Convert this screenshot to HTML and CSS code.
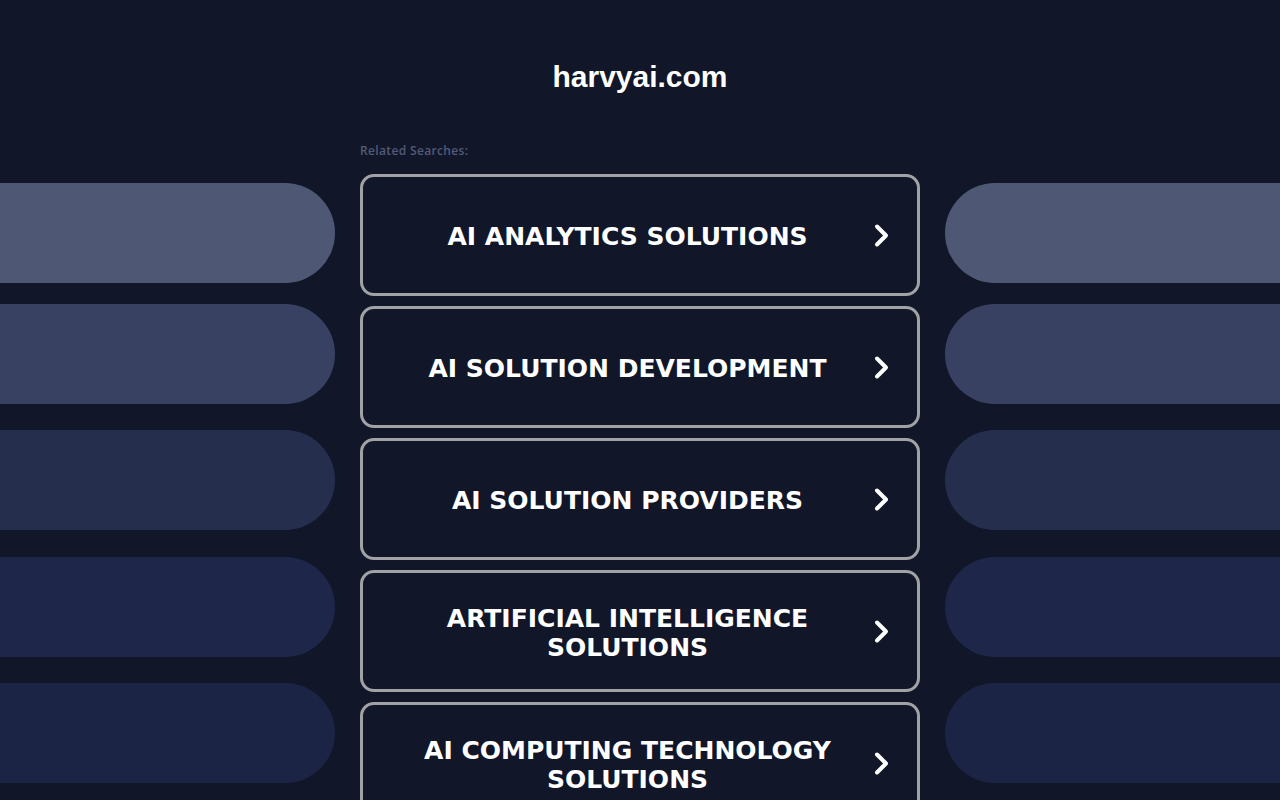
FILE: index.html
```html
<!DOCTYPE html>
<html lang="en">
<head>
<meta charset="utf-8">
<title>harvyai.com</title>
<link rel="stylesheet" href="styles.css">
</head>
<body>
<div class="page">
  <div class="side side-left">
    <div class="pill pill-1"></div>
    <div class="pill pill-2"></div>
    <div class="pill pill-3"></div>
    <div class="pill pill-4"></div>
    <div class="pill pill-5"></div>
  </div>
  <main class="center">
    <h1 class="title">harvyai.com</h1>
    <div class="related">Related Searches:</div>
    <div class="links">
      <a class="link" href="#"><span class="label">AI ANALYTICS SOLUTIONS</span><svg class="chev" viewBox="0 0 17 25"><path d="M4 3.5 L13 12.5 L4 21.5"/></svg></a>
      <a class="link" href="#"><span class="label">AI SOLUTION DEVELOPMENT</span><svg class="chev" viewBox="0 0 17 25"><path d="M4 3.5 L13 12.5 L4 21.5"/></svg></a>
      <a class="link" href="#"><span class="label">AI SOLUTION PROVIDERS</span><svg class="chev" viewBox="0 0 17 25"><path d="M4 3.5 L13 12.5 L4 21.5"/></svg></a>
      <a class="link" href="#"><span class="label">ARTIFICIAL INTELLIGENCE SOLUTIONS</span><svg class="chev" viewBox="0 0 17 25"><path d="M4 3.5 L13 12.5 L4 21.5"/></svg></a>
      <a class="link" href="#"><span class="label">AI COMPUTING TECHNOLOGY SOLUTIONS</span><svg class="chev" viewBox="0 0 17 25"><path d="M4 3.5 L13 12.5 L4 21.5"/></svg></a>
    </div>
  </main>
  <div class="side side-right">
    <div class="pill pill-1"></div>
    <div class="pill pill-2"></div>
    <div class="pill pill-3"></div>
    <div class="pill pill-4"></div>
    <div class="pill pill-5"></div>
  </div>
</div>
</body>
</html>
```
FILE: styles.css
```css
html, body {
  margin: 0;
  padding: 0;
  height: 800px;
  overflow: hidden;
  background: #111729;
}

.page {
  display: grid;
  grid-template-columns: 1fr 560px 1fr;
  column-gap: 25px;
  height: 800px;
}

.side {
  display: flex;
  flex-direction: column;
  padding-top: 183px;
}

.pill {
  height: 100px;
  flex: none;
}

.side-left .pill { border-radius: 0 50px 50px 0; }
.side-right .pill { border-radius: 50px 0 0 50px; }

.pill-1 { background: #4e5875; }
.pill-2 { background: #394162; margin-top: 21px; }
.pill-3 { background: #262e4e; margin-top: 26px; }
.pill-4 { background: #1e2649; margin-top: 27px; }
.pill-5 { background: #1c2445; margin-top: 26px; }

.center {
  display: flex;
  flex-direction: column;
  padding-top: 59px;
}

.title {
  margin: 0;
  font-family: "Liberation Sans", Arial, sans-serif;
  font-weight: 700;
  font-size: 30px;
  line-height: 36px;
  color: #ffffff;
  text-align: center;
}

.related {
  margin-top: 48px;
  font-family: "Open Sans", "Noto Sans", sans-serif;
  font-size: 12px;
  font-weight: 600;
  line-height: 16px;
  letter-spacing: 0.35px;
  color: #525a78;
}

.links {
  margin-top: 15px;
  display: flex;
  flex-direction: column;
  gap: 10px;
}

.link {
  display: flex;
  align-items: center;
  height: 122px;
  box-sizing: border-box;
  border: 3px solid #a1a2a6;
  border-radius: 14px;
  background: #111729;
  text-decoration: none;
  color: #ffffff;
  flex: none;
}

.label {
  flex: 1;
  padding-left: 39px;
  padding-top: 3px;
  margin-right: 20px;
  text-align: center;
  font-family: "DejaVu Sans", Verdana, sans-serif;
  font-weight: 700;
  font-size: 25px;
  line-height: 29px;
  letter-spacing: 0;
}

.chev {
  width: 17px;
  height: 25px;
  margin-right: 27px;
  flex: none;
}

.chev path {
  fill: none;
  stroke: #ffffff;
  stroke-width: 4;
  stroke-linecap: round;
  stroke-linejoin: round;
}
```
